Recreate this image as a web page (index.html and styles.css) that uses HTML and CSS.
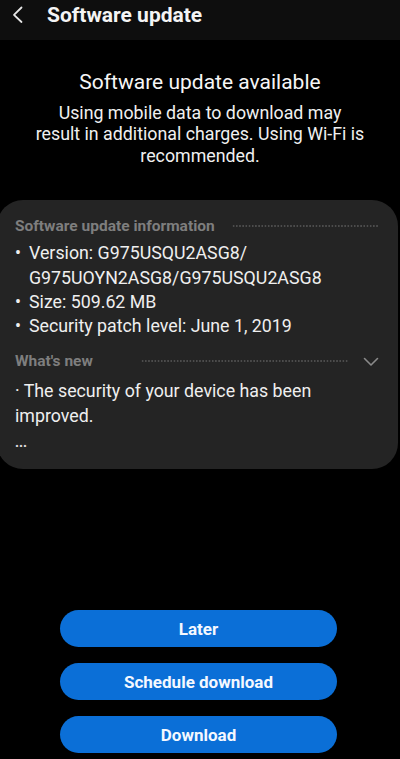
FILE: index.html
```html
<!DOCTYPE html>
<html lang="en">
<head>
<meta charset="utf-8">
<title>Software update</title>
<link rel="stylesheet" href="styles.css">
</head>
<body>
<div class="screen">
  <header class="appbar">
    <svg class="back" width="12" height="18" viewBox="0 0 12 18"><path d="M9.5 1.5 L2 8.8 L9.5 16" fill="none" stroke="#e6e6e6" stroke-width="1.8" stroke-linecap="round" stroke-linejoin="round"/></svg>
    <h1 class="title">Software update</h1>
  </header>

  <section class="hero">
    <h2 class="hero-title">Software update available</h2>
    <p class="hero-text">Using mobile data to download may<br>result in additional charges. Using Wi-Fi is recommended.</p>
  </section>

  <section class="card">
    <div class="sec-head"><span class="sec-label">Software update information</span><span class="dots"></span></div>
    <ul class="info">
      <li><span class="bullet">•</span><span>Version: G975USQU2ASG8/<br>G975UOYN2ASG8/G975USQU2ASG8</span></li>
      <li><span class="bullet">•</span><span>Size: 509.62 MB</span></li>
      <li><span class="bullet">•</span><span>Security patch level: June 1, 2019</span></li>
    </ul>
    <div class="sec-head new-head"><span class="sec-label">What's new</span><span class="dots short"></span>
      <svg class="chev" width="16" height="10" viewBox="0 0 16 10"><path d="M1.5 1.5 L8 8 L14.5 1.5" fill="none" stroke="#8a8a8a" stroke-width="1.6" stroke-linecap="round" stroke-linejoin="round"/></svg>
    </div>
    <p class="news">· The security of your device has been improved.</p>
    <p class="more">...</p>
  </section>

  <div class="spacer"></div>

  <div class="actions">
    <button class="btn">Later</button>
    <button class="btn">Schedule download</button>
    <button class="btn">Download</button>
  </div>
</div>
</body>
</html>
```

FILE: styles.css
```css
* { box-sizing: border-box; }
html, body { margin: 0; padding: 0; background: #000; }
body { font-family: Roboto, "Noto Sans", "Liberation Sans", sans-serif; color: #f2f2f2; }

.screen {
  width: 400px;
  height: 759px;
  display: flex;
  flex-direction: column;
  overflow: hidden;
}

.appbar {
  height: 40px;
  background: #0e0e0e;
  display: flex;
  align-items: flex-start;
  padding-left: 12px;
}
.back { margin-top: 6px; flex: none; }
.title {
  margin: 0 0 0 23px;
  font-size: 21px;
  font-weight: 700;
  line-height: 30px;
  color: #f4f4f4;
}

.hero {
  padding: 28px 0 0;
  text-align: center;
}
.hero-title {
  margin: 0;
  font-size: 21px;
  font-weight: 400;
  line-height: 28px;
  color: #f6f6f6;
}
.hero-text {
  width: 340px;
  margin: 6px auto 0;
  font-size: 17.8px;
  line-height: 21.4px;
  color: #f0f0f0;
}

.card {
  margin: 34px 2px 0 -3px;
  padding: 14px 18px 15px 18px;
  background: #242424;
  border-radius: 26px;
}
.sec-head {
  display: flex;
  align-items: center;
  height: 24px;
}
.sec-label {
  font-size: 15.5px;
  font-weight: 700;
  color: #7e7e7e;
  white-space: nowrap;
}
.dots {
  flex: 1;
  height: 2px;
  margin-left: 17px;
  margin-right: 2px;
  background-image: radial-gradient(circle, #4c4c4c 0.9px, transparent 1.1px);
  background-size: 3.2px 2px;
}
.dots.short { margin-right: 14px; margin-left: 48px; }
.chev { flex: none; margin-right: 1px; margin-top: 1px; }

.info {
  list-style: none;
  margin: 3px 0 0;
  padding: 0;
  font-size: 17.8px;
  line-height: 24.3px;
  color: #efefef;
}
.info li { display: flex; }
.bullet { width: 14px; flex: none; }

.new-head { margin-top: 11px; }
.news {
  margin: 5px 0 0;
  font-size: 17.8px;
  line-height: 25px;
  color: #efefef;
}
.more {
  margin: 2px 0 0;
  font-size: 14px;
  line-height: 24px;
  color: #e0e0e0;
  font-weight: 700;
}

.spacer { flex: 1; }

.actions {
  display: flex;
  flex-direction: column;
  gap: 16px;
  padding: 0 63px 6px 60px;
}
.btn {
  height: 37px;
  border: none;
  border-radius: 19px;
  background: #0b6fd7;
  color: #f4f8ff;
  font-family: Roboto, "Noto Sans", "Liberation Sans", sans-serif;
  font-size: 17px;
  font-weight: 700;
  padding: 0;
}
```
